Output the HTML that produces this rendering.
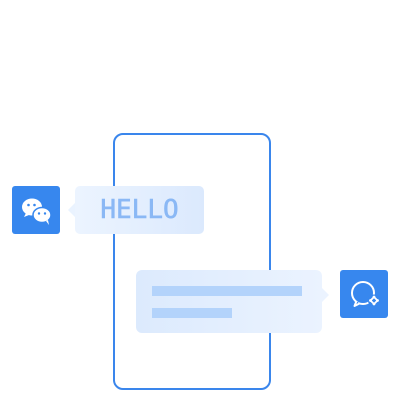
<!DOCTYPE html><html><head><style>
body{margin:0;width:400px;height:400px;background:#fff;position:relative;overflow:hidden;font-family:"DejaVu Sans Mono","Liberation Mono",monospace}
.a{position:absolute}
</style></head><body>
<div class="a" style="left:113px;top:133px;width:154px;height:253px;border:2px solid #3a86ec;border-radius:10px"></div>
<div class="a" style="left:12px;top:186px;width:48px;height:48px;background:#3787ee;border-radius:3px">
<svg width="48" height="48" viewBox="0 0 48 48"><ellipse cx="20" cy="21" rx="10" ry="8.5" fill="#fff"/><path d="M14 27l-2 4 5-2z" fill="#fff"/><circle cx="16.5" cy="19" r="1.3" fill="#3787ee"/><circle cx="22.5" cy="19" r="1.3" fill="#3787ee"/><ellipse cx="30" cy="29" rx="9" ry="7.5" fill="#fff" stroke="#3787ee" stroke-width="1.5"/><path d="M34 35l3 4-1-5z" fill="#fff"/><circle cx="27" cy="27.5" r="1.2" fill="#3787ee"/><circle cx="33" cy="27.5" r="1.2" fill="#3787ee"/></svg></div>
<div class="a" style="left:68px;top:203px;width:0;height:0;border:7px solid transparent;border-right-color:#eaf3ff;border-left:0"></div>
<div class="a" style="left:75px;top:186px;width:129px;height:48px;border-radius:5px;background:linear-gradient(90deg,#ecf4ff,#dbe9fd);color:#8ab8f5;font-size:26px;line-height:48px;text-align:center;-webkit-text-stroke:0.6px #8ab8f5">HELLO</div>
<div class="a" style="left:136px;top:270px;width:186px;height:63px;border-radius:6px;background:linear-gradient(90deg,#dceafd,#ebf3ff)"></div>
<div class="a" style="left:322px;top:288px;width:0;height:0;border:7px solid transparent;border-left-color:#ebf3ff;border-right:0"></div>
<div class="a" style="left:152px;top:286px;width:150px;height:10px;background:#b3d3fb"></div>
<div class="a" style="left:152px;top:308px;width:80px;height:10px;background:#b3d3fb"></div>
<div class="a" style="left:340px;top:270px;width:48px;height:48px;background:#3787ee;border-radius:3px">
<svg width="48" height="48" viewBox="0 0 48 48"><circle cx="23" cy="23" r="11" fill="none" stroke="#fff" stroke-width="2"/><path d="M16.5 31l-2 5 5-2.5" fill="#3787ee" stroke="#fff" stroke-width="2" stroke-linejoin="round"/><circle cx="34" cy="30.5" r="6" fill="#3787ee"/><path d="M34 27l3.5 3.5L34 34l-3.5-3.5z" fill="none" stroke="#fff" stroke-width="1.8"/><circle cx="34" cy="27" r="1.4" fill="#fff"/><circle cx="37.5" cy="30.5" r="1.4" fill="#fff"/><circle cx="34" cy="34" r="1.4" fill="#fff"/><circle cx="30.5" cy="30.5" r="1.4" fill="#fff"/></svg></div>
</body></html>
